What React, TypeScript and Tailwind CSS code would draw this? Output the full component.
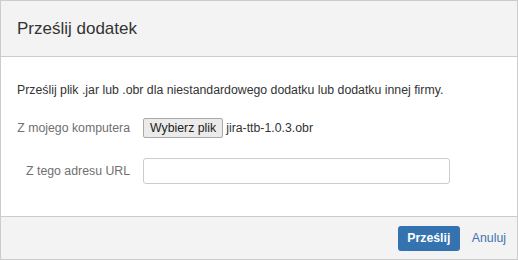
export default function App() {
	return (
		<div className="h-[260px] w-[518px] bg-white font-['Liberation_Sans',Arial,sans-serif]">
			<section className="flex h-full flex-col border border-[#cccccc]">
				<header className="flex h-[56px] items-center border-b border-[#cccccc] bg-[#f3f3f3] px-4">
					<h2 className="text-[17px] font-normal text-[#333333]">Prześlij dodatek</h2>
				</header>
				<div className="flex-1 px-4 pt-[24px]">
					<p className="text-[12.3px] text-[#333333]">
						Prześlij plik .jar lub .obr dla niestandardowego dodatku lub dodatku innej firmy.
					</p>
					<div className="mt-[19px] flex items-center">
						<label className="w-[113px] whitespace-nowrap text-right text-[12.3px] text-[#707070]">
							Z mojego komputera
						</label>
						<div className="ml-[13px] flex items-center">
							<button className="h-[20px] rounded-[2px] border border-[#a9a9a9] bg-[#ebebeb] px-[6px] text-[12.3px] leading-none text-[#222222]">
								Wybierz plik
							</button>
							<span className="ml-[3px] text-[12.3px] text-[#333333]">jira-ttb-1.0.3.obr</span>
						</div>
					</div>
					<div className="mt-[20px] flex items-center">
						<label className="w-[113px] whitespace-nowrap text-right text-[12.3px] text-[#707070]">
							Z tego adresu URL
						</label>
						<input
							type="text"
							className="ml-[13px] h-[26px] w-[307px] rounded-[3px] border border-[#cccccc] bg-white px-2 text-[12.3px] outline-none"
						/>
					</div>
				</div>
				<footer className="flex h-[43px] items-center justify-end gap-[12px] border-t border-[#cccccc] bg-[#f3f3f3] pr-[11px]">
					<button className="h-[25px] w-[62px] rounded-[3px] bg-[#3572b0] text-[12.3px] font-bold text-white">
						Prześlij
					</button>
					<button className="text-[12.3px] text-[#3b73af]">Anuluj</button>
				</footer>
			</section>
		</div>
	);
}
